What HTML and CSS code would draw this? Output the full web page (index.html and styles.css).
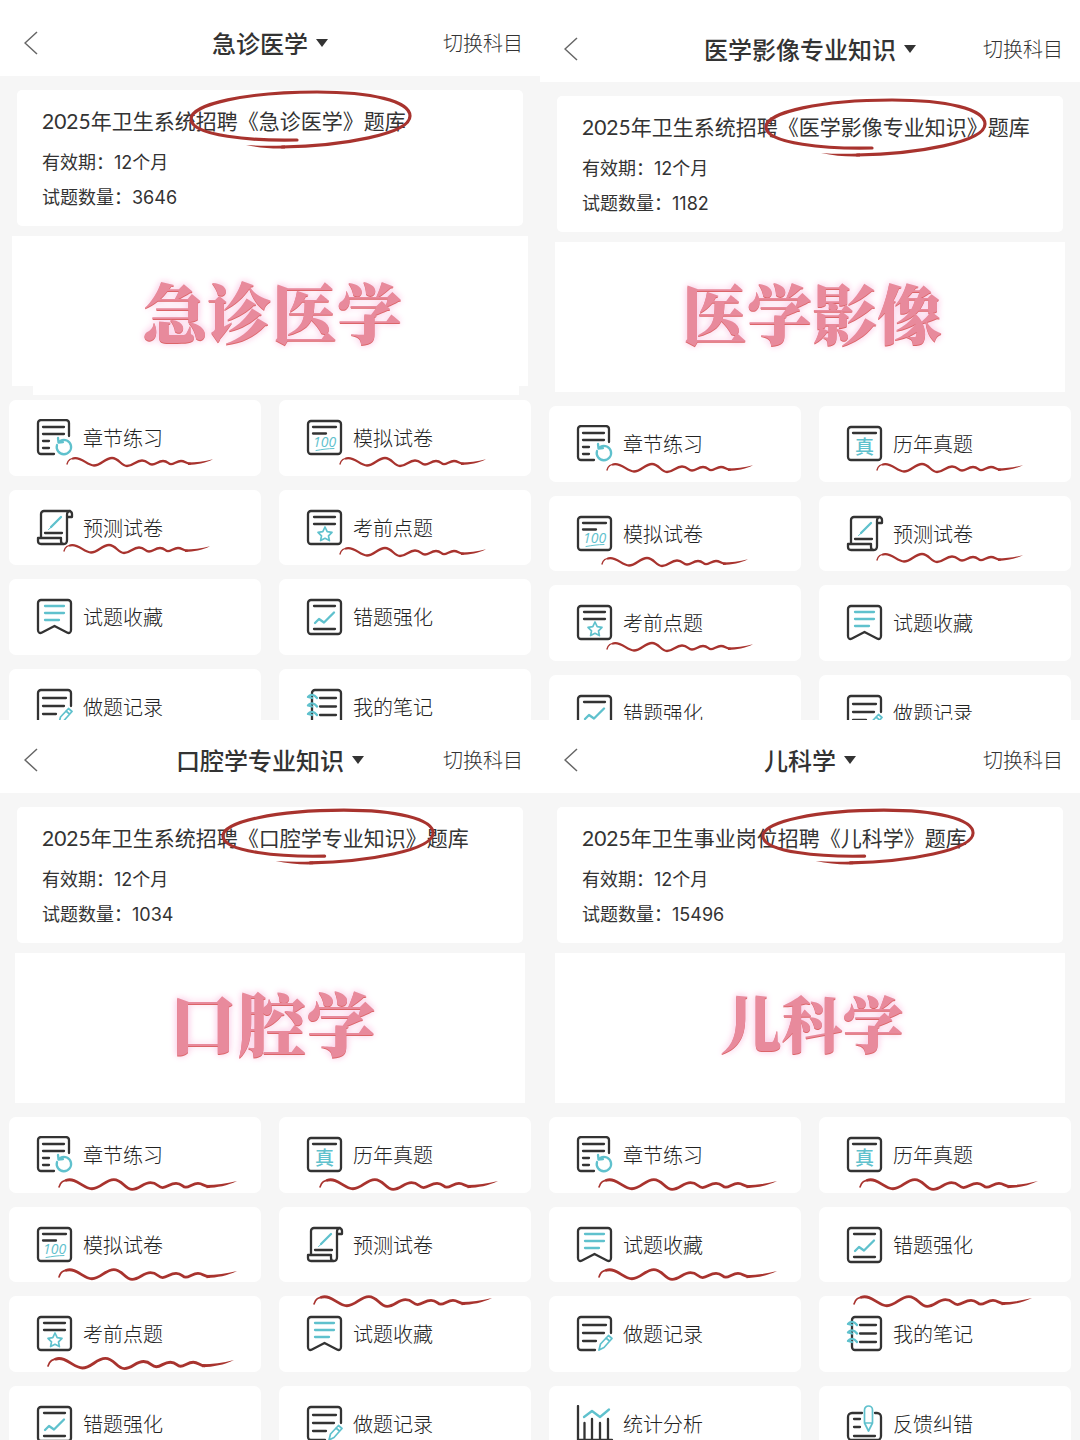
FILE: index.html
```html
<!DOCTYPE html>
<html lang="zh-CN">
<head>
<meta charset="utf-8">
<meta name="viewport" content="width=device-width, initial-scale=1">
<title>医学题库</title>
<link rel="stylesheet" href="styles.css">
</head>
<body>
<svg class="sprite" aria-hidden="true">
  <symbol id="back" viewBox="0 0 14 24"><path d="M13 1 1 12l12 11"/></symbol>
  <symbol id="chapter" viewBox="0 0 38 38">
    <path d="M33 17V4a3 3 0 0 0-3-3H5a3 3 0 0 0-3 3v28a3 3 0 0 0 3 3h13M7 8h21M7 15h21M7 22h6M7 29h6"/>
    <path class="c" d="M21 26a7.200 7.200 0 1 0 3.500-4.300M22 19l.500 4.500 4.500-.500"/>
  </symbol>
  <symbol id="mock" viewBox="0 0 38 38">
    <rect x="2" y="2" width="33" height="33" rx="3"/><path d="M7 8h23M7 14.500h13"/>
    <text class="score" x="7" y="28">100</text><path class="c thin" d="M10 31.500c6-1 12-2 18-2"/>
  </symbol>
  <symbol id="past" viewBox="0 0 38 38">
    <rect x="2" y="2" width="33" height="33" rx="3"/><path d="M7 8h23"/>
    <text class="zhen" x="9" y="29">真</text>
  </symbol>
  <symbol id="predict" viewBox="0 0 38 38">
    <path d="M5 29V5a3 3 0 0 1 3-3h25a3 3 0 0 1 3 3v3h-5M31 8V6c0-2 1-4 3-4M31 7v24c0 3-1 4-3 4H5c-2 0-3-1-3-3v-3h23v3c0 2 1 3 3 3M9 24h17"/>
    <path class="c" d="M15 18 25 8"/><path class="c thin" d="m12.500 20.500 3-2.500"/>
  </symbol>
  <symbol id="focus" viewBox="0 0 38 38">
    <rect x="2" y="2" width="33" height="33" rx="3"/><path d="M8 8h21M8 15h21"/>
    <path class="c mid" d="m19 18 2.200 4.600 4.800.700-3.500 3.500.900 4.800-4.400-2.300-4.400 2.300.900-4.800-3.500-3.500 4.800-.700z"/>
  </symbol>
  <symbol id="saved" viewBox="0 0 38 38">
    <path d="M5 2h27a3 3 0 0 1 3 3v27c0 3-2 3.500-4 2.500L18.500 28 6 34.500c-2 1-4 .500-4-2.500V5a3 3 0 0 1 3-3z"/>
    <path class="c" d="M9 8h19M9 15h19M9 22h14"/>
  </symbol>
  <symbol id="wrong" viewBox="0 0 38 38">
    <rect x="2" y="2" width="33" height="34" rx="3"/><path d="M8 8h21M8 31h21"/>
    <path class="c" d="m9 25 4-4 5 3.500 10-10"/>
  </symbol>
  <symbol id="record" viewBox="0 0 38 38">
    <path d="M35 18V5a3 3 0 0 0-3-3H5a3 3 0 0 0-3 3v27a3 3 0 0 0 3 3h14M7 10h23M7 18h21M7 26h13"/>
    <path class="c mid" d="m23 35 1.500-6 8-8.500 3.500 3-8 9zM30 23l3.500 3"/>
  </symbol>
  <symbol id="notes" viewBox="0 0 38 38">
    <rect x="6" y="2" width="29" height="33" rx="3"/><path d="M14 10h16M14 18.500h16M14 27h16"/>
    <path class="c" d="M11 10C8 6 4 6 2 9l4 1M11 18.500c-3-4-7-4-9-1l4 1M11 27c-3-4-7-4-9-1l4 1"/>
  </symbol>
  <symbol id="stats" viewBox="0 0 38 38">
    <path d="M2 1v34h34M8.500 18v16M16 14v20M24 18v16M32 14v20"/>
    <path class="c" d="m8 12 8-6 8 6 9-7.500"/>
  </symbol>
  <symbol id="feedback" viewBox="0 0 38 38">
    <path d="M16 8H6a4 4 0 0 0-4 4v19a4 4 0 0 0 4 4h25a4 4 0 0 0 4-4V12a4 4 0 0 0-4-4h-2M8 14h6M8 22h6M8 31h21"/>
    <path class="c mid" d="M18.500 18V5a4 4 0 0 1 8 0v13l-4 8zM18.500 18h8"/>
  </symbol>
  <symbol id="wave" viewBox="0 0 146 10" overflow="visible">
    <path class="ink fine" d="M0 7C1 3 4 1 9 1.200"/>
    <path class="ink" d="M6 1.500C14-1 20 8.500 27 8.500S38 1 45 1s9 8 15 8 9-5.500 15-5.500 6 4 10 4 6-3.500 11-3.500 5 3.200 8 3.200 6-3.200 10-3.200 5 2.700 9 2.700"/>
    <path class="fill" d="M121 5.500c8 0 16-1 25-3.300-8 4-16 5.300-25 5.800z"/>
  </symbol>
  <symbol id="ring" viewBox="0 0 223 58" overflow="visible">
    <path class="ink thick" d="M108 50C64 51 2 46 2 29 2 14 58 2 128 2c54 0 93 9 93 24 0 18-68 30-128 31"/>
    <path class="fill" d="M96 58.500c-14 .400-26-.800-39-3.500 12 1 25 1 39 .500z"/>
  </symbol>
</svg>

<main class="board">
  <section class="panel first">
    <header class="bar">
      <button class="back" aria-label="返回"><svg><use href="#back"/></svg></button>
      <button class="subject">急诊医学</button>
      <a class="switch" href="#">切换科目</a>
    </header>
    <div class="card">
      <h2>2025年卫生系统招聘《急诊医学》题库</h2>
      <p>有效期：12个月</p>
      <p>试题数量：3646</p>
      <svg class="ring"><use href="#ring"/></svg>
    </div>
    <div class="banner">急诊医学</div>
    <nav class="tiles">
      <a class="tile" href="#"><svg class="icon"><use href="#chapter"/></svg>章节练习<svg class="wave"><use href="#wave"/></svg></a>
      <a class="tile" href="#"><svg class="icon"><use href="#mock"/></svg>模拟试卷<svg class="wave shift"><use href="#wave"/></svg></a>
      <a class="tile" href="#"><svg class="icon"><use href="#predict"/></svg>预测试卷<svg class="wave raised"><use href="#wave"/></svg></a>
      <a class="tile" href="#"><svg class="icon"><use href="#focus"/></svg>考前点题<svg class="wave shift"><use href="#wave"/></svg></a>
      <a class="tile" href="#"><svg class="icon"><use href="#saved"/></svg>试题收藏</a>
      <a class="tile" href="#"><svg class="icon"><use href="#wrong"/></svg>错题强化</a>
      <a class="tile" href="#"><svg class="icon"><use href="#record"/></svg>做题记录</a>
      <a class="tile" href="#"><svg class="icon"><use href="#notes"/></svg>我的笔记</a>
    </nav>
  </section>

  <section class="panel second">
    <header class="bar">
      <button class="back" aria-label="返回"><svg><use href="#back"/></svg></button>
      <button class="subject">医学影像专业知识</button>
      <a class="switch" href="#">切换科目</a>
    </header>
    <div class="card">
      <h2>2025年卫生系统招聘《医学影像专业知识》题库</h2>
      <p>有效期：12个月</p>
      <p>试题数量：1182</p>
      <svg class="ring"><use href="#ring"/></svg>
    </div>
    <div class="banner">医学影像</div>
    <nav class="tiles">
      <a class="tile" href="#"><svg class="icon"><use href="#chapter"/></svg>章节练习<svg class="wave"><use href="#wave"/></svg></a>
      <a class="tile" href="#"><svg class="icon"><use href="#past"/></svg>历年真题<svg class="wave"><use href="#wave"/></svg></a>
      <a class="tile" href="#"><svg class="icon"><use href="#mock"/></svg>模拟试卷<svg class="wave lowered"><use href="#wave"/></svg></a>
      <a class="tile" href="#"><svg class="icon"><use href="#predict"/></svg>预测试卷<svg class="wave"><use href="#wave"/></svg></a>
      <a class="tile" href="#"><svg class="icon"><use href="#focus"/></svg>考前点题<svg class="wave"><use href="#wave"/></svg></a>
      <a class="tile" href="#"><svg class="icon"><use href="#saved"/></svg>试题收藏</a>
      <a class="tile" href="#"><svg class="icon"><use href="#wrong"/></svg>错题强化</a>
      <a class="tile" href="#"><svg class="icon"><use href="#record"/></svg>做题记录</a>
    </nav>
  </section>

  <section class="panel third">
    <header class="bar">
      <button class="back" aria-label="返回"><svg><use href="#back"/></svg></button>
      <button class="subject">口腔学专业知识</button>
      <a class="switch" href="#">切换科目</a>
    </header>
    <div class="card">
      <h2>2025年卫生系统招聘《口腔学专业知识》题库</h2>
      <p>有效期：12个月</p>
      <p>试题数量：1034</p>
      <svg class="ring"><use href="#ring"/></svg>
    </div>
    <div class="banner">口腔学</div>
    <nav class="tiles">
      <a class="tile" href="#"><svg class="icon"><use href="#chapter"/></svg>章节练习<svg class="wave long"><use href="#wave"/></svg></a>
      <a class="tile" href="#"><svg class="icon"><use href="#past"/></svg>历年真题<svg class="wave long inset"><use href="#wave"/></svg></a>
      <a class="tile" href="#"><svg class="icon"><use href="#mock"/></svg>模拟试卷<svg class="wave long"><use href="#wave"/></svg></a>
      <a class="tile" href="#"><svg class="icon"><use href="#predict"/></svg>预测试卷</a>
      <a class="tile" href="#"><svg class="icon"><use href="#focus"/></svg>考前点题<svg class="wave long longer"><use href="#wave"/></svg></a>
      <a class="tile" href="#"><svg class="icon"><use href="#saved"/></svg>试题收藏<svg class="wave long above"><use href="#wave"/></svg></a>
      <a class="tile" href="#"><svg class="icon"><use href="#wrong"/></svg>错题强化</a>
      <a class="tile" href="#"><svg class="icon"><use href="#record"/></svg>做题记录</a>
    </nav>
  </section>

  <section class="panel fourth">
    <header class="bar">
      <button class="back" aria-label="返回"><svg><use href="#back"/></svg></button>
      <button class="subject">儿科学</button>
      <a class="switch" href="#">切换科目</a>
    </header>
    <div class="card">
      <h2>2025年卫生事业岗位招聘《儿科学》题库</h2>
      <p>有效期：12个月</p>
      <p>试题数量：15496</p>
      <svg class="ring"><use href="#ring"/></svg>
    </div>
    <div class="banner">儿科学</div>
    <nav class="tiles">
      <a class="tile" href="#"><svg class="icon"><use href="#chapter"/></svg>章节练习<svg class="wave long"><use href="#wave"/></svg></a>
      <a class="tile" href="#"><svg class="icon"><use href="#past"/></svg>历年真题<svg class="wave long inset"><use href="#wave"/></svg></a>
      <a class="tile" href="#"><svg class="icon"><use href="#saved"/></svg>试题收藏<svg class="wave long"><use href="#wave"/></svg></a>
      <a class="tile" href="#"><svg class="icon"><use href="#wrong"/></svg>错题强化</a>
      <a class="tile" href="#"><svg class="icon"><use href="#record"/></svg>做题记录</a>
      <a class="tile" href="#"><svg class="icon"><use href="#notes"/></svg>我的笔记<svg class="wave long above"><use href="#wave"/></svg></a>
      <a class="tile" href="#"><svg class="icon"><use href="#stats"/></svg>统计分析</a>
      <a class="tile" href="#"><svg class="icon"><use href="#feedback"/></svg>反馈纠错</a>
    </nav>
  </section>
</main>
</body>
</html>
```
FILE: styles.css
```css
* { box-sizing: border-box; }

body {
  margin: 0;
  background: #f6f6f6;
  color: #333;
  font-family: "Noto Sans CJK SC", sans-serif;
}

.sprite { display: none; }

.board {
  display: grid;
  grid-template-columns: 1fr 1fr;
  grid-template-rows: 50vh 50vh;
}

.panel { overflow: hidden; background: #f6f6f6; }

/* header bar */
.bar {
  display: grid;
  grid-template-columns: 1fr auto 1fr;
  align-items: center;
  padding: 0 17px;
  height: 76px;
  padding-top: 10px;
  background: #fff;
}
.second .bar { height: 82px; padding-top: 16px; }
.third .bar, .fourth .bar { height: 73px; padding-top: 7px; }

button { padding: 0; border: 0; background: none; color: inherit; font-family: inherit; }

.back { justify-self: start; padding-left: 7px; line-height: 0; }
.back svg { width: 14px; height: 24px; fill: none; stroke: #666; stroke-width: 1.5; }

.subject {
  display: flex;
  align-items: center;
  gap: 8px;
  font-size: 24px;
  line-height: 36px;
  font-weight: 500;
}
.subject::after {
  content: "";
  border: 6px solid transparent;
  border-top: 8px solid #333;
  border-bottom: 0;
}

.switch { justify-self: end; color: #333; font-size: 20px; line-height: 30px; font-weight: 300; text-decoration: none; }

/* subject summary */
.card {
  position: relative;
  margin: 14px 17px 10px;
  padding: 15px 25px 11px;
  height: 136px;
  border-radius: 5px;
  background: #fff;
  font-family: Inter, "Noto Sans CJK SC", sans-serif;
}
.card h2 {
  margin: 0 0 8px;
  font-family: Lato, "Noto Sans CJK SC", sans-serif;
  font-size: 21px;
  line-height: 32px;
  font-weight: 400;
  white-space: nowrap;
}
.card p { margin: 0; font-size: 18px; line-height: 35px; }

.ring { position: absolute; left: 172px; top: 0; width: 223px; height: 58px; overflow: visible; }
.second .ring { left: 207px; top: 2px; }
.third .ring, .fourth .ring { left: 204px; top: 1px; width: 214px; height: 56px; }

/* large subject name */
.banner {
  position: relative;
  display: grid;
  place-items: center;
  margin: 0 15px 14px;
  padding: 0 0 12px 4px;
  height: 150px;
  background: #fff;
  color: #e88a9c;
  font-family: "Noto Serif CJK SC", "Noto Sans CJK SC", serif;
  font-size: 65px;
  line-height: 80px;
  font-weight: 900;
  text-shadow: 0 1px 0 #dc6468, 0 0 6px #fbd3ea, 0 0 8px #fbd3ea;
}
.first .banner { margin: 0 12px 14px; padding-bottom: 2px; }
.first .banner::after {
  content: "";
  position: absolute;
  left: 21px;
  right: 9px;
  top: 100%;
  height: 9px;
  background: #fff;
}
.third .banner { font-size: 69px; }
.fourth .banner { font-size: 61px; }

/* feature tiles */
.tiles {
  display: grid;
  grid-template-columns: 1fr 1fr;
  grid-auto-rows: 76px 75px;
  gap: 14px 18px;
  padding: 0 9px;
}
.tile {
  position: relative;
  display: flex;
  align-items: center;
  gap: 9px;
  padding-left: 27px;
  border-radius: 7px;
  background: #fff;
  color: #222;
  font-size: 20px;
  line-height: 30px;
  font-weight: 300;
  text-decoration: none;
}
.icon {
  width: 38px;
  height: 38px;
  fill: none;
  stroke: #333;
  stroke-width: 2.3;
  stroke-linecap: round;
  stroke-linejoin: round;
}
.c { stroke: #5fc1cd; }
.thin { stroke-width: 1; }
.mid { stroke-width: 1.7; }
.score, .zhen { fill: #5fc1cd; stroke: none; }
.score { font: italic 400 14px "Open Sans", sans-serif; }
.zhen { font: 500 19px "Noto Sans CJK SC", sans-serif; }

/* hand-drawn red marks */
.ink { fill: none; stroke: #a8332e; stroke-width: 2.3; stroke-linecap: round; }
.fine { stroke-width: 1.3; }
.thick { stroke-width: 3.2; }
.fill { fill: #a8332e; stroke: none; }

.wave { position: absolute; z-index: 1; left: 58px; top: 57px; width: 146px; height: 10px; overflow: visible; }
.wave.shift { left: 61px; }
.wave.raised { left: 55px; top: 54px; }
.wave.lowered { left: 53px; top: 61px; }
.wave.long { left: 50px; top: 61px; width: 178px; height: 13px; }
.wave.inset { left: 41px; }
.wave.longer { left: 39px; width: 186px; }
.wave.above { left: 35px; top: -1px; }
```
